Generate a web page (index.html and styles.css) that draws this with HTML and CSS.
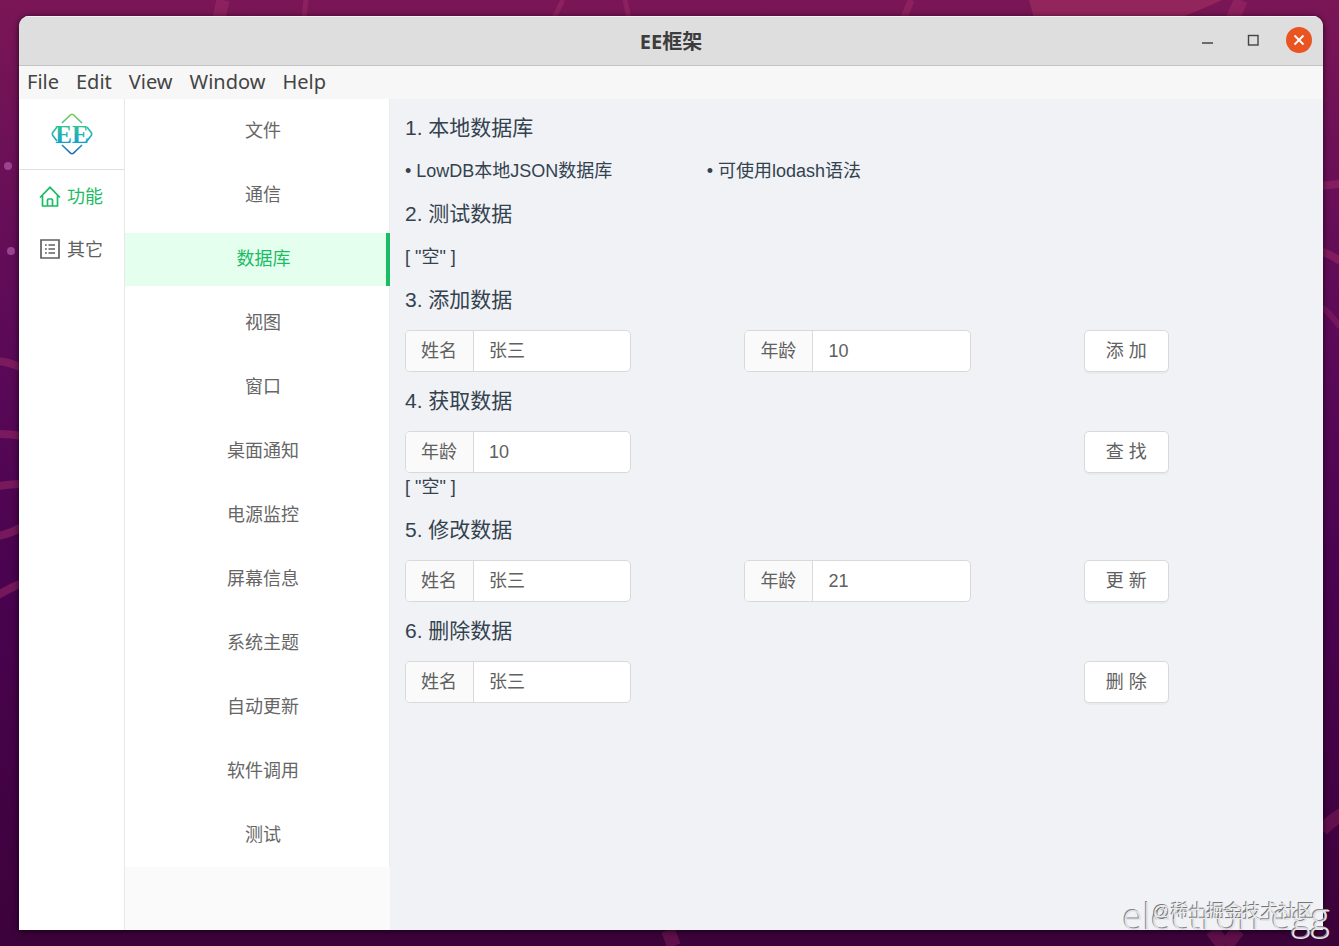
FILE: index.html
```html
<!DOCTYPE html>
<html lang="zh-CN">
<head>
<meta charset="utf-8">
<title>EE框架</title>
<link rel="stylesheet" href="styles.css">
</head>
<body>
<svg class="wallpaper" viewBox="0 0 1339 946" preserveAspectRatio="none" aria-hidden="true">
  <path class="shape" d="M1029 0H1222Q1205 8 1180 18H1034Z"/>
  <g class="streaks">
    <path stroke-width="13" d="M223 0L219 18"/>
    <path stroke-width="5" d="M306 0L304 18M563 0L554 18M625 0L629 18"/>
    <path stroke-width="7" d="M911 0L904 18"/>
    <path stroke-width="14" d="M1241 0L1233 18"/>
    <path stroke-width="8" d="M-2 361Q10 362 22 368M-2 434Q10 434 22 436M-2 486Q10 484 22 484M-2 536Q10 534 22 527M-2 595Q10 588 22 583"/>
    <path stroke-width="8" d="M1320 186L1340 184M1320 251Q1330 254 1340 261"/>
  </g>
  <g class="streaks faint">
    <path stroke-width="6" d="M1322 307Q1332 315 1340 327"/>
    <path stroke-width="13" d="M1322 830Q1330 822 1342 814"/>
    <path stroke-width="14" d="M1212 930L1224 946M1238 930L1226 946M668 930L674 946"/>
  </g>
  <circle class="dot" cx="8" cy="166" r="4"/>
  <circle class="dot" cx="11" cy="251" r="4"/>
</svg>

<div class="window">
  <header class="titlebar">
    <h1 class="title">EE框架</h1>
    <div class="controls">
      <button class="control" type="button" aria-label="最小化"><svg width="12" height="12" viewBox="0 0 12 12"><path d="M1 9H12" stroke="#444" stroke-width="1.6"/></svg></button>
      <button class="control" type="button" aria-label="最大化"><svg width="12" height="12" viewBox="0 0 12 12"><rect x="1.5" y="1.5" width="9.500" height="9.500" fill="none" stroke="#444" stroke-width="1.4"/></svg></button>
      <button class="control close" type="button" aria-label="关闭"><svg width="12" height="12" viewBox="0 0 12 12"><path d="M1.5 1.5L10.5 10.5M10.5 1.5L1.5 10.5" stroke="#fff" stroke-width="1.8"/></svg></button>
    </div>
  </header>
  <nav class="menubar">
    <button type="button">File</button>
    <button type="button">Edit</button>
    <button type="button">View</button>
    <button type="button">Window</button>
    <button type="button">Help</button>
  </nav>

  <div class="workspace">
    <aside class="sidebar">
      <div class="brand">
        <svg width="42" height="42" viewBox="0 0 42 42" role="img" aria-label="EE">
          <defs>
            <linearGradient id="g" gradientUnits="userSpaceOnUse" x1="0" y1="0" x2="0" y2="42">
              <stop offset="0" stop-color="#8ecb52"/><stop offset=".35" stop-color="#2dbf9a"/><stop offset=".65" stop-color="#16a9c9"/><stop offset="1" stop-color="#2a62b4"/>
            </linearGradient>
          </defs>
          <g fill="none" stroke="url(#g)" stroke-width="1.6">
            <path d="M11 10L19.5 1.8Q21 .6 22.5 1.8L31 10M11 32L19.5 40.2Q21 41.4 22.5 40.2L31 32M6 14L1.8 19.5Q.8 21 1.8 22.5L6 28M36 14L40.2 19.5Q41.2 21 40.2 22.5L36 28"/>
          </g>
          <text class="logo-text" x="21" y="30" text-anchor="middle" fill="url(#g)">EE</text>
        </svg>
      </div>
      <nav class="primary">
        <a class="primary-link active" href="#features">
          <svg width="22" height="22" viewBox="0 0 22 22" fill="none" stroke="currentColor" stroke-width="1.7"><path d="M1 11.500L11 1.300L21 11.500M3.500 9.500V20H18.500V9.500M8.500 19.500V14Q8.500 13 9.500 13H12.500Q13.500 13 13.500 14V19.500"/></svg>
          <span>功能</span>
        </a>
        <a class="primary-link" href="#others">
          <svg width="22" height="22" viewBox="0 0 22 22" fill="none" stroke="currentColor" stroke-width="1.7"><path d="M2 1H20V19H2ZM9.500 6H16M9.500 10H16M9.500 14H16M6 6H7.800M6 10H7.800M6 14H7.800"/></svg>
          <span>其它</span>
        </a>
      </nav>
    </aside>

    <nav class="submenu">
      <ul class="submenu-list">
        <li><a href="#file">文件</a></li>
        <li><a href="#ipc">通信</a></li>
        <li><a class="active" href="#db" aria-current="page">数据库</a></li>
        <li><a href="#view">视图</a></li>
        <li><a href="#window">窗口</a></li>
        <li><a href="#notify">桌面通知</a></li>
        <li><a href="#power">电源监控</a></li>
        <li><a href="#screen">屏幕信息</a></li>
        <li><a href="#theme">系统主题</a></li>
        <li><a href="#update">自动更新</a></li>
        <li><a href="#software">软件调用</a></li>
        <li><a href="#test">测试</a></li>
      </ul>
    </nav>

    <main class="content">
      <h2>1. 本地数据库</h2>
      <div class="notes"><span>• LowDB本地JSON数据库</span><span>• 可使用lodash语法</span></div>
      <h2>2. 测试数据</h2>
      <p>[ "空" ]</p>
      <h2>3. 添加数据</h2>
      <form class="row">
        <div class="field"><label for="add-name">姓名</label><input id="add-name" type="text" value="张三"></div>
        <div class="field second"><label for="add-age">年龄</label><input id="add-age" type="text" value="10"></div>
        <button class="btn" type="button">添 加</button>
      </form>
      <h2>4. 获取数据</h2>
      <form class="row">
        <div class="field"><label for="get-age">年龄</label><input id="get-age" type="text" value="10"></div>
        <button class="btn" type="button">查 找</button>
      </form>
      <p>[ "空" ]</p>
      <h2>5. 修改数据</h2>
      <form class="row">
        <div class="field"><label for="edit-name">姓名</label><input id="edit-name" type="text" value="张三"></div>
        <div class="field second"><label for="edit-age">年龄</label><input id="edit-age" type="text" value="21"></div>
        <button class="btn" type="button">更 新</button>
      </form>
      <h2>6. 删除数据</h2>
      <form class="row">
        <div class="field"><label for="del-name">姓名</label><input id="del-name" type="text" value="张三"></div>
        <button class="btn" type="button">删 除</button>
      </form>
    </main>
  </div>
</div>
<div class="mark mark-project">electron-egg</div>
<div class="mark mark-site">@稀土掘金技术社区</div>
</body>
</html>
```

FILE: styles.css
```css
* { box-sizing: border-box; }

body {
  margin: 0;
  min-height: 100vh;
  padding: 16px 16px 16px 19px;
  display: flex;
  position: relative;
  background: linear-gradient(#7a1656, #5c0a58 35%, #4a0350 60%, #3c023a);
  color: #34424f;
  font: 18px/28px "Liberation Sans", "Noto Sans CJK SC", sans-serif;
}

button, input { font: inherit; color: inherit; }
h1, h2, p, ul { margin: 0; padding: 0; font-weight: 400; }
a { color: inherit; text-decoration: none; }

.wallpaper { position: absolute; inset: 0; width: 100%; height: 100%; }
.shape { fill: #93255d; }
.streaks { fill: none; stroke: #a02c68; stroke-opacity: .5; }
.faint { stroke-opacity: .35; }
.dot { fill: #9b4390; }

.window {
  position: relative;
  flex: 1;
  display: flex;
  flex-direction: column;
  border-radius: 10px 10px 0 0;
  overflow: hidden;
  background: #f0f2f5;
  box-shadow: 0 1px 6px rgba(0, 0, 0, .7);
}

.titlebar {
  display: grid;
  grid-template-columns: 1fr auto 1fr;
  align-items: center;
  height: 50px;
  padding: 0 11px;
  background: #dedede;
  border-top: 1px solid #f4f2f5;
  border-bottom: 1px solid #c4c4c4;
}
.title {
  grid-column: 2;
  padding-top: 2px;
  color: #3d3d3d;
  font: 700 20px/28px "Noto Sans", "Noto Sans CJK SC", sans-serif;
}
.controls {
  display: flex;
  justify-content: flex-end;
  gap: 20px;
  padding-bottom: 2px;
}
.control {
  display: grid;
  place-items: center;
  width: 26px;
  height: 26px;
  padding: 0;
  border: 0;
  border-radius: 50%;
  background: none;
}
.close { background: #e95420; }

.menubar {
  display: flex;
  gap: 17px;
  height: 33px;
  padding: 0 8px;
  background: #f7f7f7;
  color: #444;
}
.menubar button {
  height: 32px;
  padding: 0;
  border: 0;
  background: none;
  font: 20px/30px "Noto Sans", sans-serif;
}

.workspace { flex: 1; display: flex; }

.sidebar {
  width: 106px;
  background: #fff;
  border-right: 1px solid #e8e8e8;
}
.brand {
  display: grid;
  place-items: center;
  height: 71px;
  border-bottom: 1px solid #e0e0e0;
}
.logo-text { font: 700 25px "Liberation Serif", serif; }
.primary { color: #606060; }
.primary-link {
  display: flex;
  align-items: center;
  gap: 6px;
  height: 53px;
  padding-left: 20px;
}
.primary .active { color: #1cbb65; }

.submenu {
  width: 265px;
  background: #fafafa;
  color: #666;
}
.submenu-list {
  display: flex;
  flex-direction: column;
  gap: 11px;
  padding: 6px 0 5px;
  list-style: none;
  background: #fff;
  border-right: 1px solid #eaecee;
}
.submenu-list a {
  display: block;
  padding-left: 12px;
  line-height: 53px;
  text-align: center;
}
.submenu-list .active {
  margin-right: -1px;
  padding-left: 16px;
  background: #e4ffee;
  border-right: 4px solid #1cbb65;
  color: #1cbb65;
}

.content { flex: 1; padding: 0 13px 0 15px; }
.content h2 { font-size: 21px; line-height: 58px; }
.notes { display: grid; grid-template-columns: repeat(3, 1fr); }

.row {
  display: grid;
  grid-template-columns: repeat(8, 1fr);
  padding-top: 1px;
  color: #606060;
}
.field {
  grid-column: 1 / span 2;
  display: flex;
  height: 42px;
  border: 1px solid #d9d9d9;
  border-radius: 5px;
  overflow: hidden;
  background: #fff;
}
.second { grid-column: 4 / span 2; }
.field label {
  padding: 0 16px 0 15px;
  border-right: 1px solid #d9d9d9;
  background: #fafafa;
  line-height: 40px;
}
.field input {
  flex: 1;
  min-width: 0;
  padding: 0 15px;
  border: 0;
  outline: 0;
  background: none;
}
.btn {
  grid-column: 7;
  justify-self: start;
  height: 42px;
  padding: 0 21px;
  border: 1px solid #d9d9d9;
  border-radius: 5px;
  background: #fff;
  box-shadow: 0 2px 1px rgba(0, 0, 0, .03);
  white-space: nowrap;
}

.mark { position: absolute; white-space: nowrap; pointer-events: none; }
.mark-project {
  right: 9px;
  bottom: 8px;
  color: #e4e2e6;
  font: 300 37px/44px "Open Sans", sans-serif;
  text-shadow: -1px -1px 0 #858585;
}
.mark-site {
  right: 24px;
  bottom: 20px;
  color: #e8eaec;
  text-shadow: -1px -1px 0 #777;
}
```
